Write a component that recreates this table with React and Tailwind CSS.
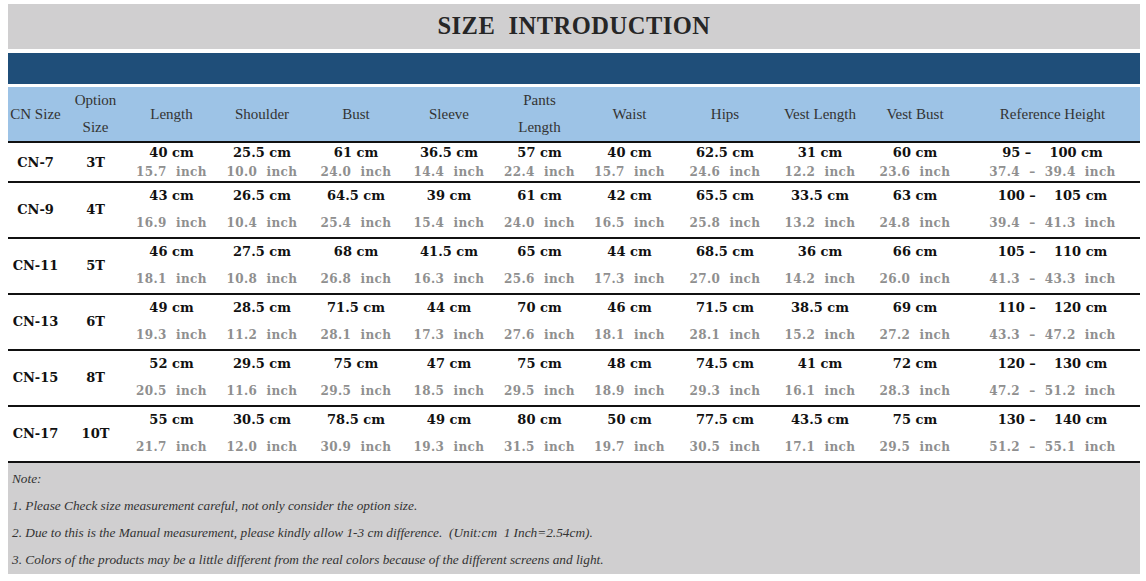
const headers = [
  ["CN Size"],
  ["Option", "Size"],
  ["Length"],
  ["Shoulder"],
  ["Bust"],
  ["Sleeve"],
  ["Pants", "Length"],
  ["Waist"],
  ["Hips"],
  ["Vest Length"],
  ["Vest Bust"],
  ["Reference Height"],
];

const rows = [
  ["CN-7", "3T", [["40", "15.7"], ["25.5", "10.0"], ["61", "24.0"], ["36.5", "14.4"], ["57", "22.4"], ["40", "15.7"], ["62.5", "24.6"], ["31", "12.2"], ["60", "23.6"]], ["95", "100"], ["37.4", "39.4"]],
  ["CN-9", "4T", [["43", "16.9"], ["26.5", "10.4"], ["64.5", "25.4"], ["39", "15.4"], ["61", "24.0"], ["42", "16.5"], ["65.5", "25.8"], ["33.5", "13.2"], ["63", "24.8"]], ["100", "105"], ["39.4", "41.3"]],
  ["CN-11", "5T", [["46", "18.1"], ["27.5", "10.8"], ["68", "26.8"], ["41.5", "16.3"], ["65", "25.6"], ["44", "17.3"], ["68.5", "27.0"], ["36", "14.2"], ["66", "26.0"]], ["105", "110"], ["41.3", "43.3"]],
  ["CN-13", "6T", [["49", "19.3"], ["28.5", "11.2"], ["71.5", "28.1"], ["44", "17.3"], ["70", "27.6"], ["46", "18.1"], ["71.5", "28.1"], ["38.5", "15.2"], ["69", "27.2"]], ["110", "120"], ["43.3", "47.2"]],
  ["CN-15", "8T", [["52", "20.5"], ["29.5", "11.6"], ["75", "29.5"], ["47", "18.5"], ["75", "29.5"], ["48", "18.9"], ["74.5", "29.3"], ["41", "16.1"], ["72", "28.3"]], ["120", "130"], ["47.2", "51.2"]],
  ["CN-17", "10T", [["55", "21.7"], ["30.5", "12.0"], ["78.5", "30.9"], ["49", "19.3"], ["80", "31.5"], ["50", "19.7"], ["77.5", "30.5"], ["43.5", "17.1"], ["75", "29.5"]], ["130", "140"], ["51.2", "55.1"]],
];

const notes = [
  "1. Please Check size measurement careful, not only consider the option size.",
  "2. Due to this is the Manual measurement, please kindly allow 1-3 cm difference.  (Unit:cm  1 Inch=2.54cm).",
  "3. Colors of the products may be a little different from the real colors because of the different screens and light.",
];

const cols =
  "grid grid-cols-[55px_65px_87px_94px_94px_92px_89px_91px_100px_90px_100px_175px]";

function SizeRow({ row, first }) {
  const [cn, opt, vals, hCm, hIn] = row;
  const cell = first
    ? "flex flex-col items-center justify-start gap-[1px] leading-[19px]"
    : "flex flex-col items-center justify-between pt-[4px] pb-[5px] leading-[18px]";
  return (
    <div className={`${cols} border-b-2 border-[#111] ${first ? "h-[40px]" : "h-[56px]"}`}>
      <div className="flex items-center justify-center font-bold text-[13px] text-[#111]">{cn}</div>
      <div className="flex items-center justify-center font-bold text-[13px] text-[#111]">{opt}</div>
      {vals.map(([cm, inch], i) => (
        <div key={i} className={cell}>
          <span className="font-bold text-[13px] text-[#111]">{cm} cm</span>
          <span className="font-bold text-[12px] text-[#8f8f8f] whitespace-pre tracking-[0.4px]">{inch}  inch</span>
        </div>
      ))}
      <div className={cell}>
        <span className="font-bold text-[13px] text-[#111] whitespace-pre">{hCm[0]} –    {hCm[1]} cm</span>
        <span className="font-bold text-[12px] text-[#8f8f8f] whitespace-pre tracking-[0.4px]">{hIn[0]}  –  {hIn[1]}  inch</span>
      </div>
    </div>
  );
}

export default function App() {
  return (
    <div className="w-[1146px] h-[581px] bg-white pt-[4px] px-[8px] font-['DejaVu_Serif',serif] overflow-hidden">
      <div className="w-[1132px]">
        <div className="h-[45px] bg-[#d0cfd0] flex items-center justify-center">
          <h1 className="font-['Liberation_Serif',serif] font-bold text-[24.5px] text-[#262626] tracking-[0.5px] whitespace-pre">
            SIZE  INTRODUCTION
          </h1>
        </div>
        <div className="h-[31px] bg-[#1f4e79] mt-[4px]" />
        <div className={`${cols} h-[56px] bg-[#9dc3e6] mt-[3px] border-b-2 border-[#111] font-['Liberation_Serif',serif] text-[15px] text-[#333]`}>
          {headers.map((h, i) => (
            <div key={i} className={`flex flex-col items-center ${h.length > 1 ? "justify-between pt-[2px] pb-[3px]" : "justify-center"} leading-[22px] whitespace-nowrap`}>
              {h.map((t) => (
                <span key={t}>{t}</span>
              ))}
            </div>
          ))}
        </div>
        {rows.map((r, i) => (
          <SizeRow key={r[0]} row={r} first={i === 0} />
        ))}
        <div className="h-[111px] bg-[#d0cfd0] pl-[4px] pt-[2px] font-['Liberation_Serif',serif] italic text-[13.3px] text-[#333] leading-[27px]">
          <p>Note:</p>
          {notes.map((n) => (
            <p key={n} className="whitespace-pre">{n}</p>
          ))}
        </div>
      </div>
    </div>
  );
}
